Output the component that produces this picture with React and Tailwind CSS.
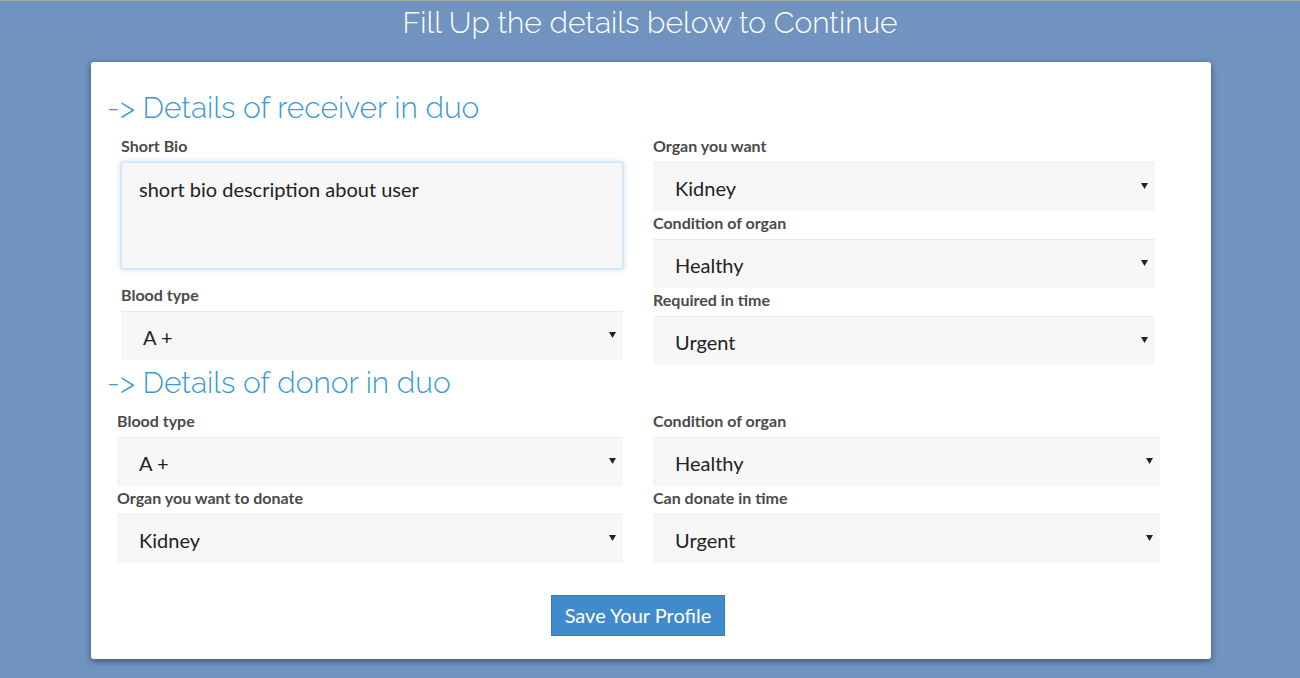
const Arrow = () => (
  <svg className="w-[7px] h-[6px] shrink-0 -mt-[2px]" viewBox="0 0 7 6" fill="#222">
    <path d="M0 0h7L3.5 6z" />
  </svg>
);

function Field({ label, value, first }) {
  return (
    <div className={first ? '' : 'mt-[3px]'}>
      <label className="block h-[20px] leading-[18px] mb-[5px] text-[16px] font-bold text-[#4a4a4a]">{label}</label>
      <div className="h-[49px] bg-[#f7f7f7] border-t border-[#ebebeb] flex items-center justify-between pl-[22px] pr-[7px]">
        <span className="text-[20px] text-[#222] pt-[1px]">{value}</span>
        <Arrow />
      </div>
    </div>
  );
}

function Heading({ children }) {
  return (
    <h2 className="pl-[16px] h-[36px] leading-[36px] text-[30px] font-light text-[#3a9ad9] font-['Raleway','Lato',sans-serif]">
      {children}
    </h2>
  );
}

export default function App() {
  return (
    <div className="min-h-screen bg-[#7093bf] border-t border-[#a6a6a6] font-['Lato','Open_Sans',sans-serif]">
      <h1 className="text-center text-white text-[30px] font-light leading-[42px] pt-[1px] font-['Raleway','Lato',sans-serif]">
        Fill Up the details below to Continue
      </h1>

      <div className="ml-[91px] mt-[18px] w-[1120px] bg-white rounded-[3px] shadow-[0_2px_6px_rgba(0,0,0,0.45)] pt-[28px] pb-[23px]">
        <Heading>-&gt; Details of receiver in duo</Heading>

        {/* receiver */}
        <div className="mt-[11px] pl-[30px] grid grid-cols-[502px_502px] gap-x-[30px] items-start">
          <div>
            <label className="block h-[20px] leading-[18px] mb-[5px] text-[16px] font-bold text-[#4a4a4a]">Short Bio</label>
            <div className="h-[107px] bg-[#f7f7f7] border border-[#cfe2f3] shadow-[0_0_5px_rgba(102,175,233,0.55)] pl-[17px] pt-[11px]">
              <span className="text-[20px] text-[#222]">short bio description about user</span>
            </div>
            <div className="mt-[17px]">
              <label className="block h-[20px] leading-[18px] mb-[5px] text-[16px] font-bold text-[#4a4a4a]">Blood type</label>
              <div className="h-[49px] bg-[#f7f7f7] border-t border-[#ebebeb] flex items-center justify-between pl-[22px] pr-[7px]">
                <span className="text-[20px] text-[#222] pt-[1px]">A +</span>
                <Arrow />
              </div>
            </div>
          </div>
          <div>
            <Field first label="Organ you want" value="Kidney" />
            <Field label="Condition of organ" value="Healthy" />
            <Field label="Required in time" value="Urgent" />
          </div>
        </div>

        <Heading>-&gt; Details of donor in duo</Heading>

        {/* donor */}
        <div className="mt-[11px] pl-[26px] grid grid-cols-[506px_507px] gap-x-[30px] items-start">
          <div>
            <Field first label="Blood type" value="A +" />
            <Field label="Organ you want to donate" value="Kidney" />
          </div>
          <div>
            <Field first label="Condition of organ" value="Healthy" />
            <Field label="Can donate in time" value="Urgent" />
          </div>
        </div>

        <button className="mt-[32px] ml-[460px] h-[41px] w-[174px] bg-[#428bca] border border-[#357ebd] text-white text-[20px] pb-[2px]">
          Save Your Profile
        </button>
      </div>
    </div>
  );
}
